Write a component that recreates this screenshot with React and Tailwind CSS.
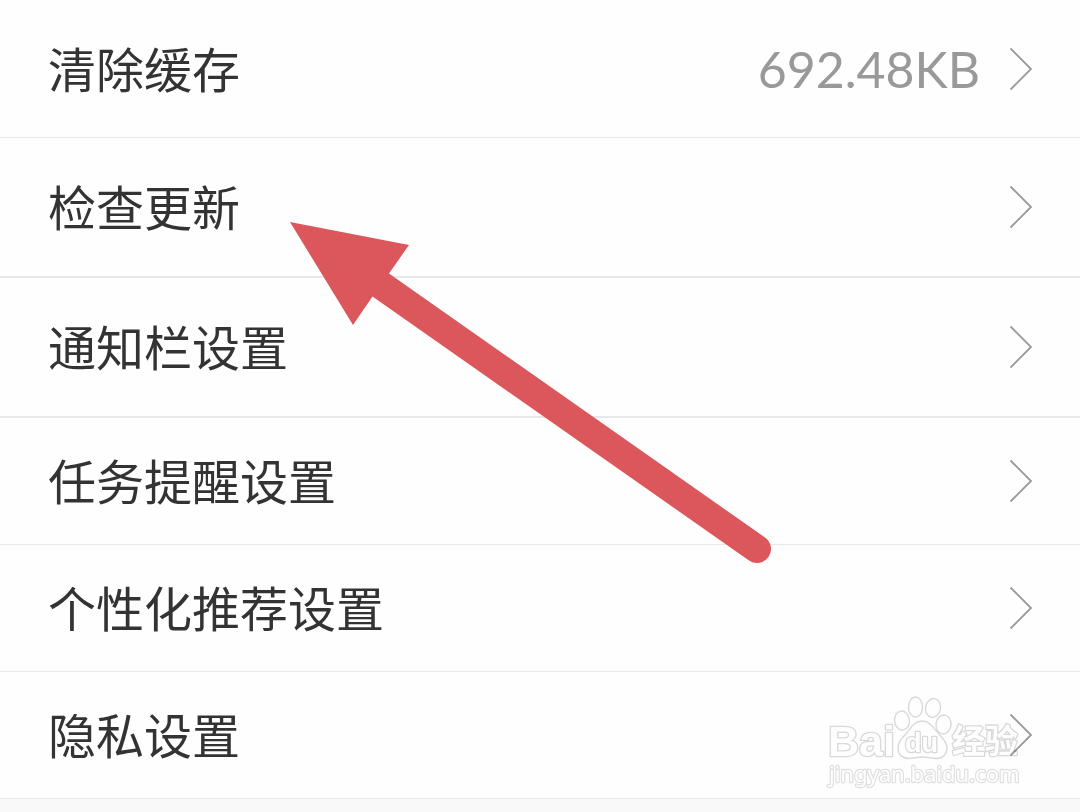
import React from "react";
import clsx from "clsx";

const SETTINGS = [
  { id: "cache", title: "清除缓存", value: "692.48KB", rowClass: "h-[138px] border-b" },
  { id: "update", title: "检查更新", rowClass: "h-[140px] border-b-2" },
  { id: "notification", title: "通知栏设置", rowClass: "h-[140px] border-b-2" },
  { id: "task", title: "任务提醒设置", rowClass: "h-[127px] border-b" },
  { id: "recommend", title: "个性化推荐设置", rowClass: "h-[127px] border-b" },
  { id: "privacy", title: "隐私设置", rowClass: "h-[127px] border-b" },
];

const ChevronIcon = () => (
  <svg
    className="h-[44px] w-[24px] shrink-0"
    viewBox="0 0 24 44"
    fill="none"
    stroke="#999999"
    strokeWidth="1.8"
    aria-hidden="true"
  >
    <path d="M1.5 1.5 22 22 1.5 42.5" />
  </svg>
);

const SettingItem = ({ item }) => (
  <li>
    <button
      type="button"
      className={clsx(
        "flex w-full items-center border-[#e8e8e8] bg-[#fefefe] pr-[47px] pl-12 text-left",
        item.rowClass
      )}
    >
      <span className="flex-1 pb-1 text-5xl text-[#333333]">{item.title}</span>
      {item.value && (
        <span className="mr-[29px] font-[Lato,sans-serif] text-[50px] leading-[48px] text-[#999999]">
          {item.value}
        </span>
      )}
      <ChevronIcon />
    </button>
  </li>
);

const PointerArrow = () => (
  <svg
    className="pointer-events-none absolute top-[221px] left-[290px] h-[344px] w-[484px]"
    viewBox="290 221 484 344"
    aria-hidden="true"
  >
    <path
      d="M290 222 409 245 389 273.500 765 537.500A14 14 0 0 1 749 560.500L372.500 296.500 353 325Z"
      fill="#db575b"
    />
  </svg>
);

// multiply keeps the chevron visible through the white letters
const Watermark = () => (
  <svg
    className="pointer-events-none absolute top-[692px] right-[54px] h-[100px] w-[202px] mix-blend-multiply"
    viewBox="824 692 202 100"
    fill="#ffffff"
    stroke="#dadada"
    strokeWidth="1.4"
    strokeLinejoin="round"
    aria-hidden="true"
  >
    <ellipse cx="902" cy="720.5" rx="7.5" ry="9.5" transform="rotate(-8 902 720.5)" />
    <ellipse cx="915.5" cy="707" rx="7" ry="10" />
    <ellipse cx="933" cy="708" rx="7.5" ry="9.5" transform="rotate(10 933 708)" />
    <ellipse cx="943.5" cy="724.5" rx="7.5" ry="9.5" transform="rotate(8 943.5 724.5)" />
    <path d="M922 721C914 721 911 728 906 734C901 739 898 742 898 748C898 755 903 758.500 909 758.500C914 758.500 917 757 922 757C928 757 931 758.500 936 758.500C943 758.500 947 754 947 748C947 741 942 738 938 733C934 728 930 721 922 721Z" />
    <g paintOrder="stroke" strokeWidth="2.6" fontFamily="'Liberation Sans', Arial, sans-serif" fontWeight="bold">
      <text x="828" y="756" fontSize="43">
        Bai
      </text>
      <text x="905" y="752" fontSize="27">
        du
      </text>
    </g>
    <text
      x="952"
      y="753"
      fontSize="33"
      fontWeight="bold"
      paintOrder="stroke"
      strokeWidth="2.6"
      fontFamily="'Noto Sans CJK SC', sans-serif"
    >
      经验
    </text>
    <text
      x="829"
      y="782"
      fontSize="22"
      paintOrder="stroke"
      strokeWidth="2.4"
      stroke="#e0e0e0"
      fontFamily="'Noto Sans', 'Open Sans', sans-serif"
    >
      jingyan.baidu.com
    </text>
  </svg>
);

const App = () => {
  return (
    <main className="relative min-h-screen w-full overflow-hidden bg-[#f9f9f9] font-['Noto_Sans_CJK_SC',sans-serif]">
      <ul>
        {SETTINGS.map((item) => (
          <SettingItem item={item} key={item.id} />
        ))}
      </ul>
      <PointerArrow />
      <Watermark />
    </main>
  );
};

export default App;
